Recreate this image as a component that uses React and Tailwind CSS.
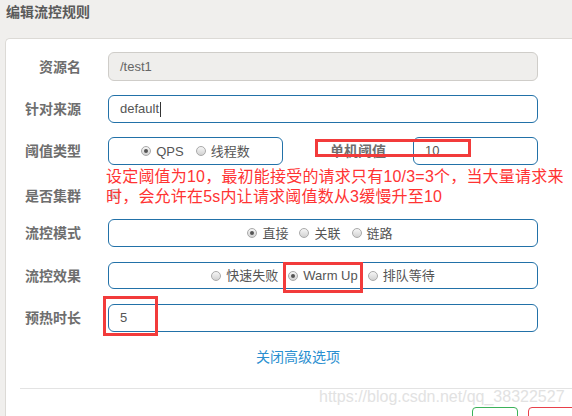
import React from "react";

const Radio = ({ checked }) => (
  <span className="inline-flex items-center justify-center w-[10px] h-[10px] rounded-full border border-[#a9a9a9] bg-linear-to-b from-[#f6f6f6] to-[#d2d2d2] shrink-0">
    {checked && <span className="block w-[4px] h-[4px] rounded-full bg-[#555]" />}
  </span>
);

const Opt = ({ checked, children }) => (
  <span className="flex items-center gap-[5px] text-[13px] text-[#555] leading-none">
    <Radio checked={checked} />
    <span>{children}</span>
  </span>
);

const Label = ({ children }) => (
  <div className="w-[75px] shrink-0 text-right text-[14px] font-bold text-[#6e6e6e] leading-none">{children}</div>
);

export default function App() {
  return (
    <div className="relative w-[572px] h-[416px] overflow-hidden bg-[#f0efed] font-['Liberation_Sans','Noto_Sans_CJK_SC',sans-serif]">
      <div className="h-[38px] pl-[6px] pt-[2px] text-[14px] font-bold text-[#5a5a5a] leading-[20px]">编辑流控规则</div>
      <div className="ml-[5px] w-[620px] h-[378px] bg-white border-l border-t border-[#dcdad6] rounded-tl-[5px]">
        {/* 资源名 */}
        <div className="pt-[13px]">
          <div className="flex items-center h-[29px]">
            <Label>资源名</Label>
            <div className="ml-[27px] w-[430px] h-[29px] rounded-[6px] border border-[#cfcdc9] bg-[#efeeec] flex items-center pl-[11px] text-[13px] text-[#666]">/test1</div>
          </div>
        </div>
        {/* 针对来源 */}
        <div className="mt-[14px] flex items-center h-[28px]">
          <Label>针对来源</Label>
          <div className="ml-[27px] w-[430px] h-[28px] rounded-[6px] border border-[#2271a8] bg-white flex items-center pl-[11px] text-[13px] text-[#555]">
            default<span className="ml-[1px] w-[1px] h-[15px] bg-[#333]" />
          </div>
        </div>
        {/* 阈值类型 */}
        <div className="mt-[14px] flex items-center h-[28px]">
          <Label>阈值类型</Label>
          <div className="ml-[27px] w-[175px] h-[28px] rounded-[6px] border border-[#2271a8] flex items-center justify-center gap-[12px]">
            <Opt checked>QPS</Opt>
            <Opt>线程数</Opt>
          </div>
          <div className="w-[103px] shrink-0 text-right text-[14px] font-bold text-[#6e6e6e] leading-none">单机阈值</div>
          <div className="ml-[27px] w-[125px] h-[28px] rounded-[6px] border border-[#2271a8] flex items-center pl-[11px] text-[13px] text-[#555]">10</div>
        </div>
        {/* 是否集群 */}
        <div className="mt-[17px] flex items-center h-[28px]">
          <Label>是否集群</Label>
          <span className="ml-[29px] mb-[4px] w-[10px] h-[10px] rounded-[2px] border border-[#b5b5b5] bg-linear-to-b from-[#f6f6f6] to-[#d8d8d8]" />
        </div>
        {/* 流控模式 */}
        <div className="mt-[9px] flex items-center h-[28px]">
          <Label>流控模式</Label>
          <div className="ml-[27px] w-[430px] h-[28px] rounded-[6px] border border-[#2271a8] flex items-center justify-center gap-[11px] pr-[6px]">
            <Opt checked>直接</Opt>
            <Opt>关联</Opt>
            <Opt>链路</Opt>
          </div>
        </div>
        {/* 流控效果 */}
        <div className="mt-[15px] flex items-center h-[27px]">
          <Label>流控效果</Label>
          <div className="ml-[27px] w-[430px] h-[27px] rounded-[6px] border border-[#2271a8] flex items-center justify-center gap-[10px]">
            <Opt>快速失败</Opt>
            <Opt checked>Warm Up</Opt>
            <Opt>排队等待</Opt>
          </div>
        </div>
        {/* 预热时长 */}
        <div className="mt-[15px] flex items-center h-[28px]">
          <Label>预热时长</Label>
          <div className="ml-[27px] w-[430px] h-[28px] rounded-[6px] border border-[#2271a8] flex items-center pl-[11px] text-[13px] text-[#555]">5</div>
        </div>
        <div className="mt-[15px] h-[20px] leading-[20px] pl-[250px] text-[14px] text-[#2a8fd0]">关闭高级选项</div>
        <div className="mt-[21px] ml-[14px] h-[1px] bg-[#e3e3e3]" />
        <div className="mt-[18px] ml-[466px] flex gap-[10px]">
          <div className="w-[46px] h-[30px] rounded-[4px] border border-[#3cb25a]" />
          <div className="w-[60px] h-[30px] rounded-[4px] border border-[#e8404a]" />
        </div>
      </div>

      {/* annotations */}
      <div className="absolute left-[106px] top-[167px] text-[16px] leading-[20px] tracking-[0.2px] text-[#ff3333] whitespace-nowrap">
        <div>设定阈值为10，最初能接受的请求只有10/3=3个，当大量请求来</div>
        <div>时，会允许在5s内让请求阈值数从3缓慢升至10</div>
      </div>
      <div className="absolute left-[315px] top-[139px] w-[156px] h-[18px] border-[3px] border-[#f23b3b]" />
      <div className="absolute left-[283px] top-[262px] w-[80px] h-[31px] border-[3px] border-[#f23b3b]" />
      <div className="absolute left-[103px] top-[296px] w-[55px] h-[40px] border-[3px] border-[#f23b3b]" />
      <div className="absolute left-[319px] top-[388px] text-[16px] leading-[18px] text-[#e2e2e2] whitespace-nowrap">https://blog.csdn.net/qq_38322527</div>
    </div>
  );
}
